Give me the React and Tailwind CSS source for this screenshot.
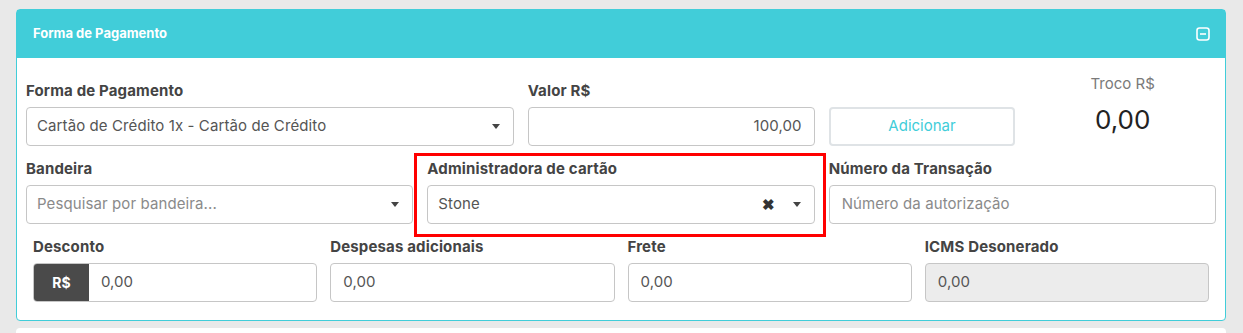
import React from 'react';

const Caret = () => (
  <svg width="8" height="5" viewBox="0 0 8 5" className="shrink-0">
    <path d="M0 0h8L4 5z" fill="#444" />
  </svg>
);

const Label = ({ children, className = '' }) => (
  <div className={`text-[15px] leading-5 font-bold tracking-[0.15px] text-[#444] ${className}`}>{children}</div>
);

const SelectBox = ({ value, placeholder, clearable }) => (
  <div className="h-[39px] mt-1.5 rounded border border-[#c6c6c6] bg-white flex items-center pl-[10px] pr-[13px]">
    <span className={`flex-1 text-[15px] tracking-[0.1px] ${value ? 'text-[#555]' : 'text-[#8a8a8a]'}`}>{value || placeholder}</span>
    {clearable && <span className="mr-[18px] text-[15px] font-bold text-[#333] leading-none">✖</span>}
    <Caret />
  </div>
);

const TextBox = ({ value, placeholder, right, disabled, className = '' }) => (
  <div className={`h-[39px] rounded border border-[#c6c6c6] flex items-center px-3 text-[15px] tracking-[0.1px] ${disabled ? 'bg-[#ececec]' : 'bg-white'} ${right ? 'justify-end' : ''} ${className}`}>
    <span className={value ? 'text-[#555]' : 'text-[#8a8a8a]'}>{value || placeholder}</span>
  </div>
);

export default function App() {
  return (
    <div className="min-h-[333px] bg-[#e9e9e9] pt-[9px] px-4 font-['Inter',sans-serif] overflow-hidden">
      <div className="w-[1210px] rounded border border-[#41cdd9] bg-white">
        <div className="h-12 bg-[#41cdd9] flex items-center justify-between pl-4 pr-[15px]">
          <span className="text-white text-[13px] font-bold">Forma de Pagamento</span>
          <svg width="14" height="14" viewBox="0 0 14 14">
            <rect x="1" y="1" width="12" height="12" rx="2.5" fill="none" stroke="white" strokeWidth="1.6" />
            <path d="M4 7h6" stroke="white" strokeWidth="1.6" />
          </svg>
        </div>

        <div className="pt-[23px] pb-[18px] px-[9px]">
          <div className="grid grid-cols-12 gap-x-[14px]">
            <div className="col-span-5">
              <Label>Forma de Pagamento</Label>
              <SelectBox value="Cartão de Crédito 1x - Cartão de Crédito" />
            </div>
            <div className="col-span-3">
              <Label>Valor R$</Label>
              <TextBox value="100,00" right className="mt-1.5" />
            </div>
            <div className="col-span-2 flex items-end">
              <div className="w-full h-[39px] rounded border-2 border-[#dfe3e6] flex items-center justify-center text-[15px] text-[#41cdd9]">
                Adicionar
              </div>
            </div>
            <div className="col-span-2 flex flex-col items-center -mt-[7px]">
              <span className="text-[15px] leading-5 text-[#7a7a7a]">Troco R$</span>
              <span className="mt-[12px] text-[26px] leading-[28px] text-[#222]">0,00</span>
            </div>
          </div>

          <div className="grid grid-cols-3 gap-x-[14px] mt-[13px]">
            <div>
              <Label>Bandeira</Label>
              <SelectBox placeholder="Pesquisar por bandeira..." />
            </div>
            <div className="relative">
              <div className="absolute -left-[13px] -right-[11px] -top-[6px] -bottom-[13px] border-[3px] border-[#f00] pointer-events-none" />
              <Label>Administradora de cartão</Label>
              <SelectBox value="Stone" clearable />
            </div>
            <div>
              <Label>Número da Transação</Label>
              <TextBox placeholder="Número da autorização" className="mt-1.5" />
            </div>
          </div>

          <div className="grid grid-cols-4 gap-x-[13px] mt-[13px] px-[7px]">
            <div>
              <Label>Desconto</Label>
              <div className="h-[39px] mt-[6px] flex rounded border border-[#c6c6c6] overflow-hidden bg-white">
                <div className="w-[55px] bg-[#4a4a4a] text-white font-bold text-[14px] flex items-center justify-center">R$</div>
                <div className="flex-1 flex items-center px-3 text-[15px] text-[#555]">0,00</div>
              </div>
            </div>
            <div>
              <Label>Despesas adicionais</Label>
              <TextBox value="0,00" className="mt-[6px]" />
            </div>
            <div>
              <Label>Frete</Label>
              <TextBox value="0,00" className="mt-[6px]" />
            </div>
            <div>
              <Label>ICMS Desonerado</Label>
              <TextBox value="0,00" disabled className="mt-[6px]" />
            </div>
          </div>
        </div>
      </div>
      <div className="w-[1210px] h-5 mt-[7px] rounded bg-white" />
    </div>
  );
}
